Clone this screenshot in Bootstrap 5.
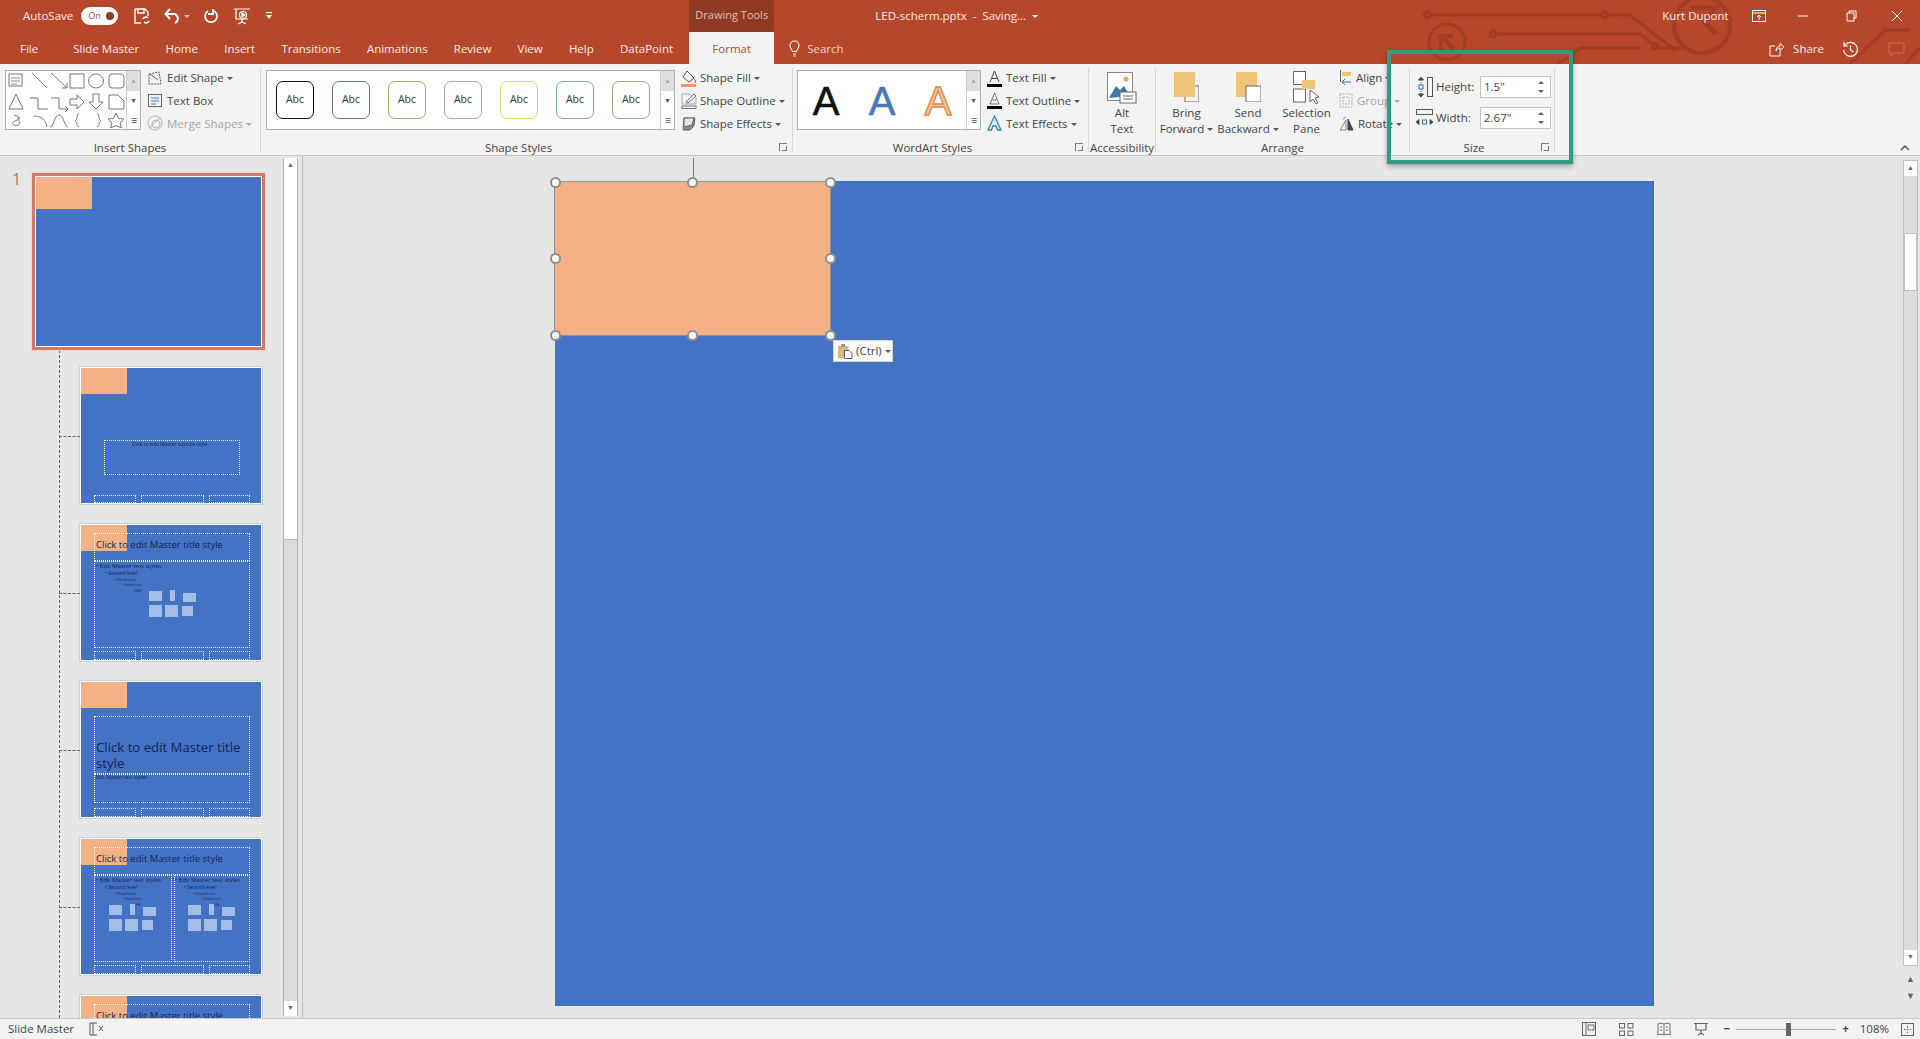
<!DOCTYPE html>
<html lang="en">
<head>
<meta charset="UTF-8">
<title>LED-scherm.pptx - PowerPoint</title>
<link href="https://cdn.jsdelivr.net/npm/bootstrap@5.3.3/dist/css/bootstrap.min.css" rel="stylesheet">
<style>
html,body{height:1039px;overflow:hidden}
body{position:relative;font-family:"Open Sans","Liberation Sans",sans-serif;font-size:11.5px;color:#444;background:#e6e6e6;line-height:1.2}
svg{display:block;flex:none}
.pp-top{position:relative;height:64px;background:#b7472a;color:#fbeeea;flex:none}
.pp-circuit{position:absolute;left:1400px;top:0}
.pp-row1{position:relative;height:32px;padding-left:23px}
.pp-row2{position:relative;height:32px}
.pp-toggle{width:37px;height:18px;border-radius:9px;background:#fff;color:#b7472a;font-size:9px;padding-left:7px;margin-left:8px;margin-right:16px;position:relative;line-height:18px}
.pp-toggle::after{content:"";position:absolute;right:4px;top:5px;width:8px;height:8px;border-radius:50%;background:#8f3a22}
.pp-tools{width:85px;height:34px;background:#8f3a22;color:#e6bdb0;font-size:11px;text-align:center;line-height:32px;margin-left:416px}
.pp-title{width:161px;margin-left:101px;white-space:nowrap}
.pp-user{margin-left:626px;white-space:nowrap}
.qa-gap{margin-left:14px}
.win-ribbon{margin-left:auto;margin-right:31px}
.win-min{margin-right:37px}
.win-restore{margin-right:34px}
.win-close{margin-right:17px}
.pp-tab{padding:2px 13.1px 0;white-space:nowrap}
.pp-tab.first{padding-left:20px;padding-right:35px}
.pp-tab.first + .pp-tab{padding-left:0}
.pp-format{background:#f3f3f3;color:#b7472a;width:85px;height:32px;text-align:center;line-height:30px;padding:2px 0 0;margin-left:3px}
.search-ico{margin-left:15px;margin-right:3px}
.search-txt{margin-left:4px;padding-top:2px;color:#f2d5cc}
.share-wrap{margin-left:auto;padding-top:2px}
.share-txt{margin-left:8px;margin-right:18px}
.share-hist{margin-right:29px}
.share-note{margin-right:15px}
.pp-ribbon{height:92px;background:#f3f3f3;border-bottom:1px solid #c9c9c9;flex:none;position:relative}
.rb-group{position:relative;height:84px;margin-top:4px;border-right:1px solid #d6d6d6;flex:none}
.w-shapes{width:261px}
.w-styles{width:532px}
.w-wordart{width:296px}
.w-access{width:67px}
.w-arrange{width:254px}
.w-size{width:145px}
.rb-body{height:66px;padding-top:2px}
.rb-label{position:absolute;left:0;right:0;top:72px;text-align:center;line-height:16px;white-space:nowrap}
.has-launch .rb-label{padding-right:16px}
.rb-launch{position:absolute;right:5px;bottom:1px;width:8px;height:8px;border-left:1px solid #777;border-top:1px solid #777}
.rb-launch::after{content:"";position:absolute;right:0;bottom:0;width:5px;height:5px;border-right:1px solid #777;border-bottom:1px solid #777}
.rb-gallery{height:60px;background:#fff;border:1px solid #aeaeae;position:relative}
.gal-shapes{margin-left:5px;width:136px}
.gal-shapes svg{margin-top:-1px}
.gal-styles{margin-left:5px;width:409px}
.gal-wordart{margin-left:4px;width:184px}
.rb-spin{width:14px;height:60px;border-left:1px solid #ccc;flex:none}
.rb-spin span{display:block;height:20px;color:#555;text-align:center;font-size:7px;line-height:19px}
.rb-spin span:first-child{background:#dedede;color:#aaa}
.rb-col{margin-left:6px;margin-top:-3px}
.rb-item{height:22.6px;white-space:nowrap;gap:4px}
.rb-item.flush{gap:3px}
.rb-off{color:#a6a6a6}
.caret-d{display:inline-block;width:0;height:0;border:3px solid transparent;border-top:3px solid #555;border-bottom:0;margin-left:3px;vertical-align:2px}
.caret-w{border-top-color:#fff}
.caret-p{border-top-color:#eebcae;margin-left:2px;align-self:center}
.caret-g{border-top-color:#aaa}
.abc-row{gap:18px;padding:10px 0 0 9px}
.abc-box{width:38px;height:38px;border-radius:7px;background:#fff;border:1px solid #888;font-size:10.5px;text-align:center;line-height:35px;color:#333;flex:none}
.wa{font-family:"Liberation Sans",sans-serif;font-size:40px;line-height:60px;width:56px;text-align:center}
.wa-black{color:#111;-webkit-text-stroke:.6px #111}
.wa-blue{color:#4a76b8;-webkit-text-stroke:.6px #4a76b8}
.wa-orange{color:#f7c9a3;-webkit-text-stroke:1.5px #e08c4a}
.big-btn{text-align:center;line-height:16px;white-space:nowrap;flex:none}
.big-btn svg{margin-left:auto;margin-right:auto}
.ico-alt{margin-top:2px;margin-bottom:1px}
.ico-order{margin-top:2px;margin-bottom:3px}
.ico-pane{margin-top:1px;margin-bottom:1px}
.btn-forward{width:61px}
.btn-back{width:62px}
.btn-pane{width:55px}
.rb-align{margin-left:5px;margin-top:-3px}
.size-body{padding:8px 0 0 6px}
.size-line{height:22px}
.size-line.upper{margin-bottom:9px}
.size-name{margin:0 6px 0 3px;width:38px}
.size-input{width:71px;height:22px;background:#fff;border:1px solid #c4c4c4;padding-left:3px;line-height:20px;position:relative}
.size-input::before,.size-input::after{content:"";position:absolute;right:6px;border:3.5px solid transparent}
.size-input::before{top:4px;border-bottom-color:#666;border-top:0}
.size-input::after{bottom:4px;border-top-color:#666;border-bottom:0}
.rb-collapse{margin:80px 10px 0 auto}
.pp-main{flex:1 1 auto;min-height:0}
.pp-side{width:303px;border-right:1px solid #bdbdbd;position:relative;overflow:hidden;flex:none}
.pp-list{width:283px;padding-top:17px;flex:none;position:relative}
.pp-num{position:absolute;left:12px;top:14px;font-size:16px;color:#c0705c}
.pp-current{position:relative;margin-left:32px;width:233px;height:177px;border:3px solid #d27a68;outline:1px solid #f6d5c9;background:#4472c4;box-shadow:inset 0 0 0 1px #fff}
.pp-current i{display:block;width:56px;height:32px;margin:1px;background:#f4b183}
.pp-tree{position:absolute;left:59px;top:194px;bottom:0;border-left:1px dashed #666}
.thumb{position:relative;margin-left:80px;width:182px;height:137px;background:#4472c4;border:1px solid #fff;outline:1px solid #c5d3dc;margin-top:20px;color:#132456}
.pp-current + .thumb{margin-top:17px}
.thumb::before{content:"";position:absolute;left:-22px;top:50%;width:21px;border-top:1px dashed #666}
.thumb i{position:absolute;left:0;top:0;width:46px;height:26px;background:#f4b183;display:block}
.ph{position:absolute;border:1px dotted #fff}
.ph-text{position:absolute;white-space:nowrap;line-height:1}
.ph-big{position:absolute;left:15px;top:57px;font-size:13.2px;line-height:16px;width:152px}
.ph-ico{position:absolute;width:47px;height:29px}
.pp-track{width:15px;border-left:1px solid #b0b0b0;border-right:1px solid #b0b0b0;background:#dcdcdc;margin-top:2px;margin-bottom:2px;flex:none}
.sb-up,.sb-down{height:15px;background:#fff;color:#666;font-size:7px;text-align:center;line-height:14px;flex:none}
.sb-thumb{height:367px;background:#fff;border-bottom:1px solid #b0b0b0;flex:none}
.pp-canvas{flex:1 1 auto;position:relative;padding:25px 0 0 252px;min-width:0}
.slide{width:1099px;height:825px;background:#4472c4;position:relative;border-right:1px solid #3b64ad}
.shape{position:absolute;left:-1px;top:0;width:277px;height:155px;background:#f4b183;border:1px solid #8f8f8f}
.rot-line{position:absolute;left:50%;top:-24px;height:24px;border-left:1px solid #777}
.hnd{position:absolute;width:11px;height:11px;margin:-5.5px 0 0 -5.5px;border-radius:50%;background:#fff;border:2px solid #8f8f8f}
.h-t{top:0}.h-m{top:50%}.h-b{top:100%}
.h-l{left:0}.h-c{left:50%}.h-r{left:100%}
.paste-tag{position:absolute;left:278px;top:158px;width:60px;height:22px;background:#fff;border:1px solid #d5d5d5;gap:3px;padding-left:4px;white-space:nowrap}
.pp-rscroll{width:15px;margin-right:2px;padding-top:4px;flex:none;color:#666;font-size:8px;text-align:center}
.rs-track{width:15px;flex:1 1 auto;background:#dcdcdc;border:1px solid #c0c0c0;position:relative}
.rs-thumb{height:58px;background:#fff;margin-top:57px;border:1px solid #c0c0c0}
.rs-pages{height:52px;padding-top:4px;font-size:9px;line-height:17px}
.pp-status{height:21px;background:#f3f3f3;border-top:1px solid #c9c9c9;flex:none;padding-left:8px;position:relative;line-height:18px}
.st-spell{margin-left:15px}
.st-first{margin-left:auto}
.st-view{margin-left:23px}
.st-minus{margin-left:16px;font-weight:700}
.st-plus{font-weight:700}
.st-pct{margin-left:11px}
.st-fit{margin:0 6px 0 12px}
.st-zoom{width:100px;height:1px;background:#aaa;position:relative;margin:0 6px}
.st-zoom::after{content:"";position:absolute;left:50px;top:-6px;width:5px;height:13px;background:#666}
.pp-mark{position:absolute;left:1387px;top:50px;width:186px;height:114px;border:4px solid #2c9c83;box-shadow:0 2px 5px rgba(0,0,0,.35);pointer-events:none}
</style>
</head>
<body class="d-flex flex-column">

<header class="pp-top">
  <svg class="pp-circuit" width="520" height="64" fill="none" stroke="#a23e24" stroke-width="3">
    <circle cx="27" cy="15" r="3"/><path d="M30 15H202M208 15H230L276 51"/><circle cx="205" cy="15" r="3"/>
    <circle cx="47" cy="42" r="18"/><path d="M41 50V36H53M41 36L54 49" stroke-width="4"/>
    <circle cx="93" cy="34" r="3"/><path d="M96 34H240L258 48H285L294 51M240 48H180L158 64"/><circle cx="255" cy="46" r="3"/>
    <circle cx="302" cy="25" r="28" stroke-width="4"/><path d="M290 8H316L304 22L316 34" stroke-width="5"/>
    <path d="M450 64L485 30H510M505 64L520 48"/>
  </svg>
  <div class="pp-row1 d-flex align-items-center">
    <span>AutoSave</span>
    <span class="pp-toggle">On</span>
    <svg width="16" height="18" viewBox="0 0 16 18" fill="none" stroke="#fff" stroke-width="1.4"><path d="M1 2H11L14 5V9M1 2V16H7M4 2V6H10V2"/><path d="M9 12a3 3 0 0 1 5-1M15 14a3 3 0 0 1-5 1" stroke-width="1.6"/></svg>
    <svg class="qa-gap" width="18" height="16" viewBox="0 0 18 16" fill="none" stroke="#fff" stroke-width="2"><path d="M2 6H11a5 5 0 0 1 0 9M6 1L1.500 6L6 11"/></svg>
    <span class="caret-d caret-p"></span>
    <svg class="qa-gap" width="15" height="16" viewBox="0 0 15 16" fill="none" stroke="#fff" stroke-width="1.800"><path d="M9 2.500a6 6 0 1 1-5 .5M9 1V6H4"/></svg>
    <svg class="qa-gap" width="18" height="18" viewBox="0 0 18 18" fill="none" stroke="#fff" stroke-width="1.200"><path d="M1 2H17M3 2V12H15M9 12V15M5 17L9 15L13 17"/><circle cx="10" cy="8" r="3.500"/><path d="M9 6L12 8L9 10Z" fill="#fff"/></svg>
    <svg class="qa-gap" width="8" height="10" viewBox="0 0 8 10" fill="#fff"><rect x="1" y="1" width="6" height="1.200"/><path d="M1 4H7L4 8Z"/></svg>
    <div class="pp-tools">Drawing Tools</div>
    <div class="pp-title">LED-scherm.pptx&nbsp; - &nbsp;Saving... <span class="caret-d caret-w"></span></div>
    <div class="pp-user">Kurt Dupont</div>
    <svg class="win-ribbon" width="14" height="12" viewBox="0 0 14 12" fill="none" stroke="#fff"><rect x=".5" y=".5" width="13" height="11"/><path d="M0 3H14M7 10V5M5 7L7 5L9 7"/></svg>
    <svg class="win-min" width="12" height="12" viewBox="0 0 12 12" stroke="#fff"><path d="M1 6H11"/></svg>
    <svg class="win-restore" width="11" height="12" viewBox="0 0 11 12" fill="none" stroke="#fff"><path d="M3 3V1H10V8H8M1 3H8V11H1Z"/></svg>
    <svg class="win-close" width="12" height="12" viewBox="0 0 12 12" stroke="#fff"><path d="M1 1L11 11M11 1L1 11"/></svg>
  </div>
  <div class="pp-row2 d-flex align-items-center">
    <span class="pp-tab first">File</span>
    <span class="pp-tab">Slide Master</span>
    <span class="pp-tab">Home</span>
    <span class="pp-tab">Insert</span>
    <span class="pp-tab">Transitions</span>
    <span class="pp-tab">Animations</span>
    <span class="pp-tab">Review</span>
    <span class="pp-tab">View</span>
    <span class="pp-tab">Help</span>
    <span class="pp-tab">DataPoint</span>
    <span class="pp-tab pp-format">Format</span>
    <svg class="search-ico" width="11" height="17" viewBox="0 0 11 17" fill="none" stroke="#fff" stroke-width="1.100"><path d="M3.500 11.500C3 9 1 8.500 1 5.500a4.500 4.500 0 0 1 9 0C10 8.500 8 9 7.500 11.500ZM4 14H7M4.500 16H6.500"/></svg>
    <span class="search-txt">Search</span>
    <div class="share-wrap d-flex align-items-center">
      <svg width="16" height="15" viewBox="0 0 16 15" fill="none" stroke="#fff"><path d="M11 9V14H1V4H6M7 9C7 6 9 4 11 4V1.500L15 5L11 8.500V6C9 6 8 7 7 9Z"/></svg>
      <span class="share-txt">Share</span>
      <svg class="share-hist" width="17" height="17" viewBox="0 0 17 17" fill="none" stroke="#fff" stroke-width="1.200"><path d="M3 4a7 7 0 1 1-1.500 5M2 1V5H6M8.500 4.500V9L11.500 11"/></svg>
      <svg class="share-note" width="17" height="15" viewBox="0 0 17 15" fill="none" stroke="#c9705a"><path d="M1 1H16V11H6L3 14V11H1Z"/></svg>
    </div>
  </div>
</header>

<section class="pp-ribbon d-flex">
  <!-- Insert Shapes -->
  <div class="rb-group w-shapes">
    <div class="rb-body d-flex">
      <div class="rb-gallery gal-shapes d-flex">
        <svg width="120" height="58" viewBox="0 0 120 58" fill="none" stroke="#777">
          <rect x="3" y="4" width="13" height="12"/><path d="M5 8H14M5 11H14M5 14H11" stroke="#6f8db8"/>
          <path d="M26 3L41 18"/><path d="M45 3L61 18M56 18H61V13"/>
          <rect x="64" y="4" width="14" height="14"/><ellipse cx="90" cy="11" rx="7.500" ry="7"/><rect x="103" y="4" width="15" height="14" rx="3"/>
          <path d="M10 24L3 39H17Z"/><path d="M24 28H32V39H42"/><path d="M45 28H53V39H62M59 36L62 39L59 42"/>
          <path d="M64 29H71V25L78 32L71 39V35H64Z"/><path d="M87 24H93V32H97L90 39L83 32H87Z"/><path d="M103 25H112L118 31V39H103Z"/>
          <path d="M8 46C14 44 14 50 9 51S7 57 12 55 10 50 14 47"/><path d="M28 46C35 46 40 50 41 57"/><path d="M44 57C48 57 48 45 53 45S58 57 62 57"/>
          <path d="M73 44C70 44 72 50 69 51C72 52 70 57 73 57"/><path d="M91 44C94 44 92 50 95 51C92 52 94 57 91 57"/>
          <path d="M110 43L112.500 48.500L118 49L114 53L115.500 58L110 55.500L104.500 58L106 53L102 49L107.500 48.500Z"/>
        </svg>
        <div class="rb-spin"><span>&#9650;</span><span>&#9660;</span><span>&#9776;</span></div>
      </div>
      <div class="rb-col">
        <div class="rb-item d-flex align-items-center"><svg width="16" height="15" viewBox="0 0 16 15" fill="none" stroke="#555" stroke-dasharray="2 1"><path d="M2 3L12 1L14 13L2 13Z"/><path d="M3 3L11 9" stroke="#4472c4" stroke-dasharray="0"/></svg><span>Edit Shape<span class="caret-d"></span></span></div>
        <div class="rb-item d-flex align-items-center"><svg width="16" height="15" viewBox="0 0 16 15" fill="none" stroke="#666"><rect x="1.500" y="1.500" width="13" height="12"/><path d="M4 5H12M4 8H12M4 11H9" stroke="#4472c4"/></svg><span>Text Box</span></div>
        <div class="rb-item rb-off d-flex align-items-center"><svg width="16" height="16" viewBox="0 0 16 16" fill="none" stroke="#b5b5b5"><circle cx="8" cy="8" r="7"/><circle cx="9" cy="9" r="4"/><path d="M2 13L13 3"/></svg><span>Merge Shapes<span class="caret-d caret-g"></span></span></div>
      </div>
    </div>
    <div class="rb-label">Insert Shapes</div>
  </div>
  <!-- Shape Styles -->
  <div class="rb-group w-styles has-launch">
    <div class="rb-body d-flex">
      <div class="rb-gallery gal-styles d-flex">
        <div id="abc-row" class="abc-row d-flex flex-grow-1"></div>
        <div class="rb-spin"><span>&#9650;</span><span>&#9660;</span><span>&#9776;</span></div>
      </div>
      <div class="rb-col">
        <div class="rb-item flush d-flex align-items-center"><svg width="16" height="17" viewBox="0 0 16 17" fill="none" stroke="#555"><path d="M6 1L13 8L8 12L2 7Z"/><path d="M13 9C15 11 15 12 14 13"/><rect x="0" y="14" width="15" height="3" fill="#ed9a5e" stroke="none"/></svg><span>Shape Fill<span class="caret-d"></span></span></div>
        <div class="rb-item flush d-flex align-items-center"><svg width="16" height="17" viewBox="0 0 16 17" fill="none" stroke="#777"><path d="M1 12V2H9M15 5V12H1" stroke="#aaa"/><path d="M5 10L13 2L15 4L7 11Z" stroke="#4472c4"/><rect x="1" y="14" width="14" height="2.500"/></svg><span>Shape Outline<span class="caret-d"></span></span></div>
        <div class="rb-item flush d-flex align-items-center"><svg width="16" height="15" viewBox="0 0 16 15" fill="#888" stroke="#666"><path d="M3 2H14L13 10L9 14H2Z"/><path d="M3 2H13L11 9L3 11Z" fill="#e4e4e4"/></svg><span>Shape Effects<span class="caret-d"></span></span></div>
      </div>
    </div>
    <div class="rb-label">Shape Styles</div>
    <span class="rb-launch"></span>
  </div>
  <!-- WordArt Styles -->
  <div class="rb-group w-wordart has-launch">
    <div class="rb-body d-flex">
      <div class="rb-gallery gal-wordart d-flex">
        <div class="d-flex flex-grow-1">
          <span class="wa wa-black">A</span>
          <span class="wa wa-blue">A</span>
          <span class="wa wa-orange">A</span>
        </div>
        <div class="rb-spin"><span>&#9650;</span><span>&#9660;</span><span>&#9776;</span></div>
      </div>
      <div class="rb-col">
        <div class="rb-item d-flex align-items-center"><svg width="15" height="17" viewBox="0 0 15 17" fill="none" stroke="#444"><path d="M3 12L7.500 1L12 12M4.500 8.500H10.500"/><rect x="0" y="14" width="15" height="3" fill="#000" stroke="none"/></svg><span>Text Fill<span class="caret-d"></span></span></div>
        <div class="rb-item d-flex align-items-center"><svg width="15" height="17" viewBox="0 0 15 17" fill="none" stroke="#555"><path d="M3 12L7.500 1L12 12H3M5.500 8H9.500" stroke-dasharray="2 .5"/><rect x="0" y="14" width="15" height="3" fill="#000" stroke="none"/></svg><span>Text Outline<span class="caret-d"></span></span></div>
        <div class="rb-item d-flex align-items-center"><svg width="15" height="17" viewBox="0 0 15 17" fill="#d5ebf7" stroke="#3f87b5" stroke-width="1.300"><path d="M1 15L7.500 1L14 15H10.500L9 11H6L4.500 15Z"/></svg><span>Text Effects<span class="caret-d"></span></span></div>
      </div>
    </div>
    <div class="rb-label">WordArt Styles</div>
    <span class="rb-launch"></span>
  </div>
  <!-- Accessibility -->
  <div class="rb-group w-access">
    <div class="rb-body big-btn">
      <svg class="ico-alt" width="30" height="32" viewBox="0 0 30 32" fill="none"><rect x=".5" y=".5" width="25" height="28" stroke="#888" fill="#fff"/><circle cx="19" cy="7" r="2.500" fill="#ee9f62"/><path d="M2 26L9 14L13 18L17 14L23 24Z" fill="#3c78a9"/><rect x="13" y="20" width="16" height="11" fill="#fff" stroke="#666"/><path d="M16 24H26M16 27H26" stroke="#666"/></svg>
      <div>Alt</div><div>Text</div>
    </div>
    <div class="rb-label">Accessibility</div>
  </div>
  <!-- Arrange -->
  <div class="rb-group w-arrange">
    <div class="rb-body d-flex">
      <div class="big-btn btn-forward">
        <svg class="ico-order" width="25" height="30" viewBox="0 0 25 30"><rect x="0" y="0" width="21" height="25" fill="#efc478"/><path d="M21 14H25V30H11V25" fill="none" stroke="#666"/></svg>
        <div>Bring</div><div>Forward<span class="caret-d"></span></div>
      </div>
      <div class="big-btn btn-back">
        <svg class="ico-order" width="25" height="30" viewBox="0 0 25 30"><rect x="0" y="0" width="21" height="25" fill="#efc478"/><rect x="10" y="14" width="15" height="16" fill="#fff" stroke="#666"/></svg>
        <div>Send</div><div>Backward<span class="caret-d"></span></div>
      </div>
      <div class="big-btn btn-pane">
        <svg class="ico-pane" width="27" height="33" viewBox="0 0 27 33"><rect x=".5" y=".5" width="12" height="13" fill="#fff" stroke="#666"/><rect x=".5" y="18" width="12" height="13" fill="#fff" stroke="#666"/><rect x="9" y="9" width="13" height="9" fill="#efc478"/><path d="M17 19V31L20 28L23 33L25 32L22 27L26 26Z" fill="#fff" stroke="#666"/></svg>
        <div>Selection</div><div>Pane</div>
      </div>
      <div class="rb-align">
        <div class="rb-item d-flex align-items-center"><svg width="13" height="17" viewBox="0 0 13 17" fill="none"><path d="M1.500 0V12" stroke="#666"/><rect x="3" y="2" width="9" height="4" fill="#efc478"/><path d="M12 12H3M6 9L3 12L6 15" stroke="#3672a8"/></svg><span>Align<span class="caret-d"></span></span></div>
        <div class="rb-item rb-off d-flex align-items-center"><svg width="14" height="17" viewBox="0 0 14 17" fill="none" stroke="#b5b5b5" stroke-dasharray="2 1"><rect x="1" y="2" width="12" height="13"/><rect x="4" y="5" width="6" height="7"/></svg><span>Group<span class="caret-d caret-g"></span></span></div>
        <div class="rb-item d-flex align-items-center"><svg width="15" height="15" viewBox="0 0 15 15" fill="none" stroke="#888"><path d="M1 14L7 4V14ZM4 3L7 1"/><path d="M9 14V3L14 14Z" fill="#444" stroke="#444"/></svg><span>Rotate<span class="caret-d"></span></span></div>
      </div>
    </div>
    <div class="rb-label">Arrange</div>
  </div>
  <!-- Size -->
  <div class="rb-group w-size has-launch">
    <div class="rb-body size-body">
      <div class="size-line upper d-flex align-items-center">
        <svg width="17" height="20" viewBox="0 0 17 20" fill="none" stroke="#555"><rect x="11.500" y=".5" width="5" height="19"/><path d="M5 0L2.500 3H7.500ZM5 20L2.500 17H7.500Z" fill="#444"/><rect x="3" y="8" width="4" height="4" stroke="#3672a8"/><path d="M5 3V8M5 12V17" stroke-dasharray="1 1"/></svg>
        <span class="size-name">Height:</span>
        <div class="size-input">1.5"</div>
      </div>
      <div class="size-line d-flex align-items-center">
        <svg width="17" height="20" viewBox="0 0 17 20" fill="none" stroke="#555"><rect x=".5" y="1.500" width="16" height="5"/><path d="M0 14L3 11.500V16.500ZM17 14L14 11.500V16.500Z" fill="#444"/><rect x="6.500" y="12" width="4" height="4" stroke="#3672a8"/></svg>
        <span class="size-name">Width:</span>
        <div class="size-input">2.67"</div>
      </div>
    </div>
    <div class="rb-label">Size</div>
    <span class="rb-launch"></span>
  </div>
  <svg class="rb-collapse" width="10" height="7" viewBox="0 0 10 7" fill="none" stroke="#555" stroke-width="1.500"><path d="M1 6L5 2L9 6"/></svg>
</section>

<main class="pp-main d-flex">
  <aside class="pp-side d-flex">
    <div class="pp-list" id="thumbs">
      <div class="pp-tree"></div>
      <span class="pp-num">1</span>
      <div class="pp-current"><i></i></div>
    </div>
    <div class="pp-track d-flex flex-column">
      <div class="sb-up">&#9650;</div>
      <div class="sb-thumb"></div>
      <div class="flex-grow-1"></div>
      <div class="sb-down">&#9660;</div>
    </div>
  </aside>

  <div class="pp-canvas">
    <div class="slide">
      <div class="shape">
        <div class="rot-line"></div>
        <span class="hnd h-t h-l"></span><span class="hnd h-t h-c"></span><span class="hnd h-t h-r"></span>
        <span class="hnd h-m h-l"></span><span class="hnd h-m h-r"></span>
        <span class="hnd h-b h-l"></span><span class="hnd h-b h-c"></span><span class="hnd h-b h-r"></span>
        <div class="paste-tag d-flex align-items-center">
          <svg width="15" height="15" viewBox="0 0 15 15"><rect x="0" y="2" width="10" height="12" fill="#d6b887"/><rect x="3" y="0" width="4" height="3" fill="#999"/><path d="M6.500 6.500H11L14 9.500V14.500H6.500Z" fill="#fff" stroke="#555"/></svg>
          <span>(Ctrl)<span class="caret-d"></span></span>
        </div>
      </div>
    </div>
  </div>

  <div class="pp-rscroll d-flex flex-column">
    <div class="rs-track d-flex flex-column">
      <div class="sb-up">&#9650;</div>
      <div class="rs-thumb"></div>
      <div class="flex-grow-1"></div>
      <div class="sb-down">&#9660;</div>
    </div>
    <div class="rs-pages">&#9650;<br>&#9660;</div>
  </div>
</main>

<footer class="pp-status d-flex align-items-center">
  <span>Slide Master</span>
  <svg class="st-spell" width="15" height="14" viewBox="0 0 15 14" fill="none" stroke="#555"><path d="M8 1H1V13H8M4 1V13"/><path d="M10 4L14 9M14 4L10 9"/></svg>
  <svg class="st-first" width="14" height="14" viewBox="0 0 14 14" fill="none" stroke="#666"><rect x=".5" y=".5" width="13" height="13"/><path d="M4 1V13M6 3H12V8H6Z"/></svg>
  <svg class="st-view" width="15" height="13" viewBox="0 0 15 13" fill="none" stroke="#666"><rect x=".5" y=".5" width="5" height="4.500"/><rect x="9" y=".5" width="5" height="4.500"/><rect x=".5" y="8" width="5" height="4.500"/><rect x="9" y="8" width="5" height="4.500"/></svg>
  <svg class="st-view" width="14" height="14" viewBox="0 0 14 14" fill="none" stroke="#666"><path d="M7 2C5 1 3 1 1 2V13C3 12 5 12 7 13C9 12 11 12 13 13V2C11 1 9 1 7 2ZM7 2V13M3 5H5M3 8H5M9 5H11M9 8H11"/></svg>
  <svg class="st-view" width="14" height="14" viewBox="0 0 14 14" fill="none" stroke="#666"><path d="M0 1.500H14M2 2V8H12V2M7 8V11M4 13L7 11L10 13" stroke-width="1.200"/></svg>
  <span class="st-minus">&minus;</span>
  <div class="st-zoom"></div>
  <span class="st-plus">+</span>
  <span class="st-pct">108%</span>
  <svg class="st-fit" width="13" height="13" viewBox="0 0 13 13" fill="none" stroke="#666"><rect x=".5" y=".5" width="12" height="12"/><path d="M3 6.500H10M6.500 3V10" stroke-dasharray="1.500 1.500"/></svg>
</footer>

<div class="pp-mark"></div>

<script src="https://cdn.jsdelivr.net/npm/bootstrap@5.3.3/dist/js/bootstrap.bundle.min.js"></script>
<script>
// galeria de estilos
const abcColors = ["#111", "#5c7390", "#b8a06a", "#a9a9a9", "#dcd675", "#7fa6bb", "#9aa77f"];
document.getElementById("abc-row").innerHTML = abcColors.map(c => `<div class="abc-box" style="border-color:${c}">Abc</div>`).join("");

// miniaturas de los layouts
const box = (x, y, w, h) => `<div class="ph" style="left:${x}px;top:${y}px;width:${w}px;height:${h}px"></div>`;
const txt = (x, y, size, t) => `<span class="ph-text" style="left:${x}px;top:${y}px;font-size:${size}px">${t}</span>`;
const footer = y => box(13, y, 42, 135 - y) + box(60, y, 63, 135 - y) + box(128, y, 41, 135 - y);
const icons = (x, y) => `<svg class="ph-ico" style="left:${x}px;top:${y}px" viewBox="0 0 47 29" fill="#a3bde6">
  <rect x="0" y="1" width="13" height="10"/><rect x="21" y="0" width="5" height="11"/><rect x="34" y="3" width="13" height="9"/>
  <rect x="0" y="15" width="13" height="12"/><rect x="16" y="15" width="13" height="12"/><rect x="33" y="16" width="11" height="10"/></svg>`;
const bullets = (x, y) => txt(x, y, 6, "• Edit Master text styles") + txt(x + 9, y + 8, 5, "• Second level") + txt(x + 18, y + 15, 4, "• Third level") + txt(x + 27, y + 21, 3, "• Fourth level") + txt(x + 37, y + 27, 3, "• Fifth");
const title = txt(15, 15, 9.5, "Click to edit Master title style");

const layouts = [
  box(23, 72, 136, 35) + txt(51, 74, 5, "Click to edit Master subtitle style") + footer(127),
  box(13, 8, 156, 28) + box(13, 36, 156, 87) + title + bullets(15, 38) + icons(68, 65) + footer(126),
  box(13, 34, 156, 58) + box(13, 92, 156, 29) + `<span class="ph-big">Click to edit Master title style</span>` + txt(15, 93, 5, "Edit Master text styles") + footer(126),
  box(13, 8, 156, 28) + box(13, 36, 78, 87) + box(93, 36, 76, 87) + title + bullets(15, 38) + bullets(94, 38) + icons(28, 65) + icons(107, 65) + footer(126),
  box(13, 8, 156, 28) + box(13, 36, 156, 87) + title + bullets(15, 38) + icons(68, 65) + footer(126)
];
const list = document.getElementById("thumbs");
layouts.forEach(html => {
  const t = document.createElement("div");
  t.className = "thumb";
  t.innerHTML = "<i></i>" + html;
  list.appendChild(t);
});
</script>
</body>
</html>
